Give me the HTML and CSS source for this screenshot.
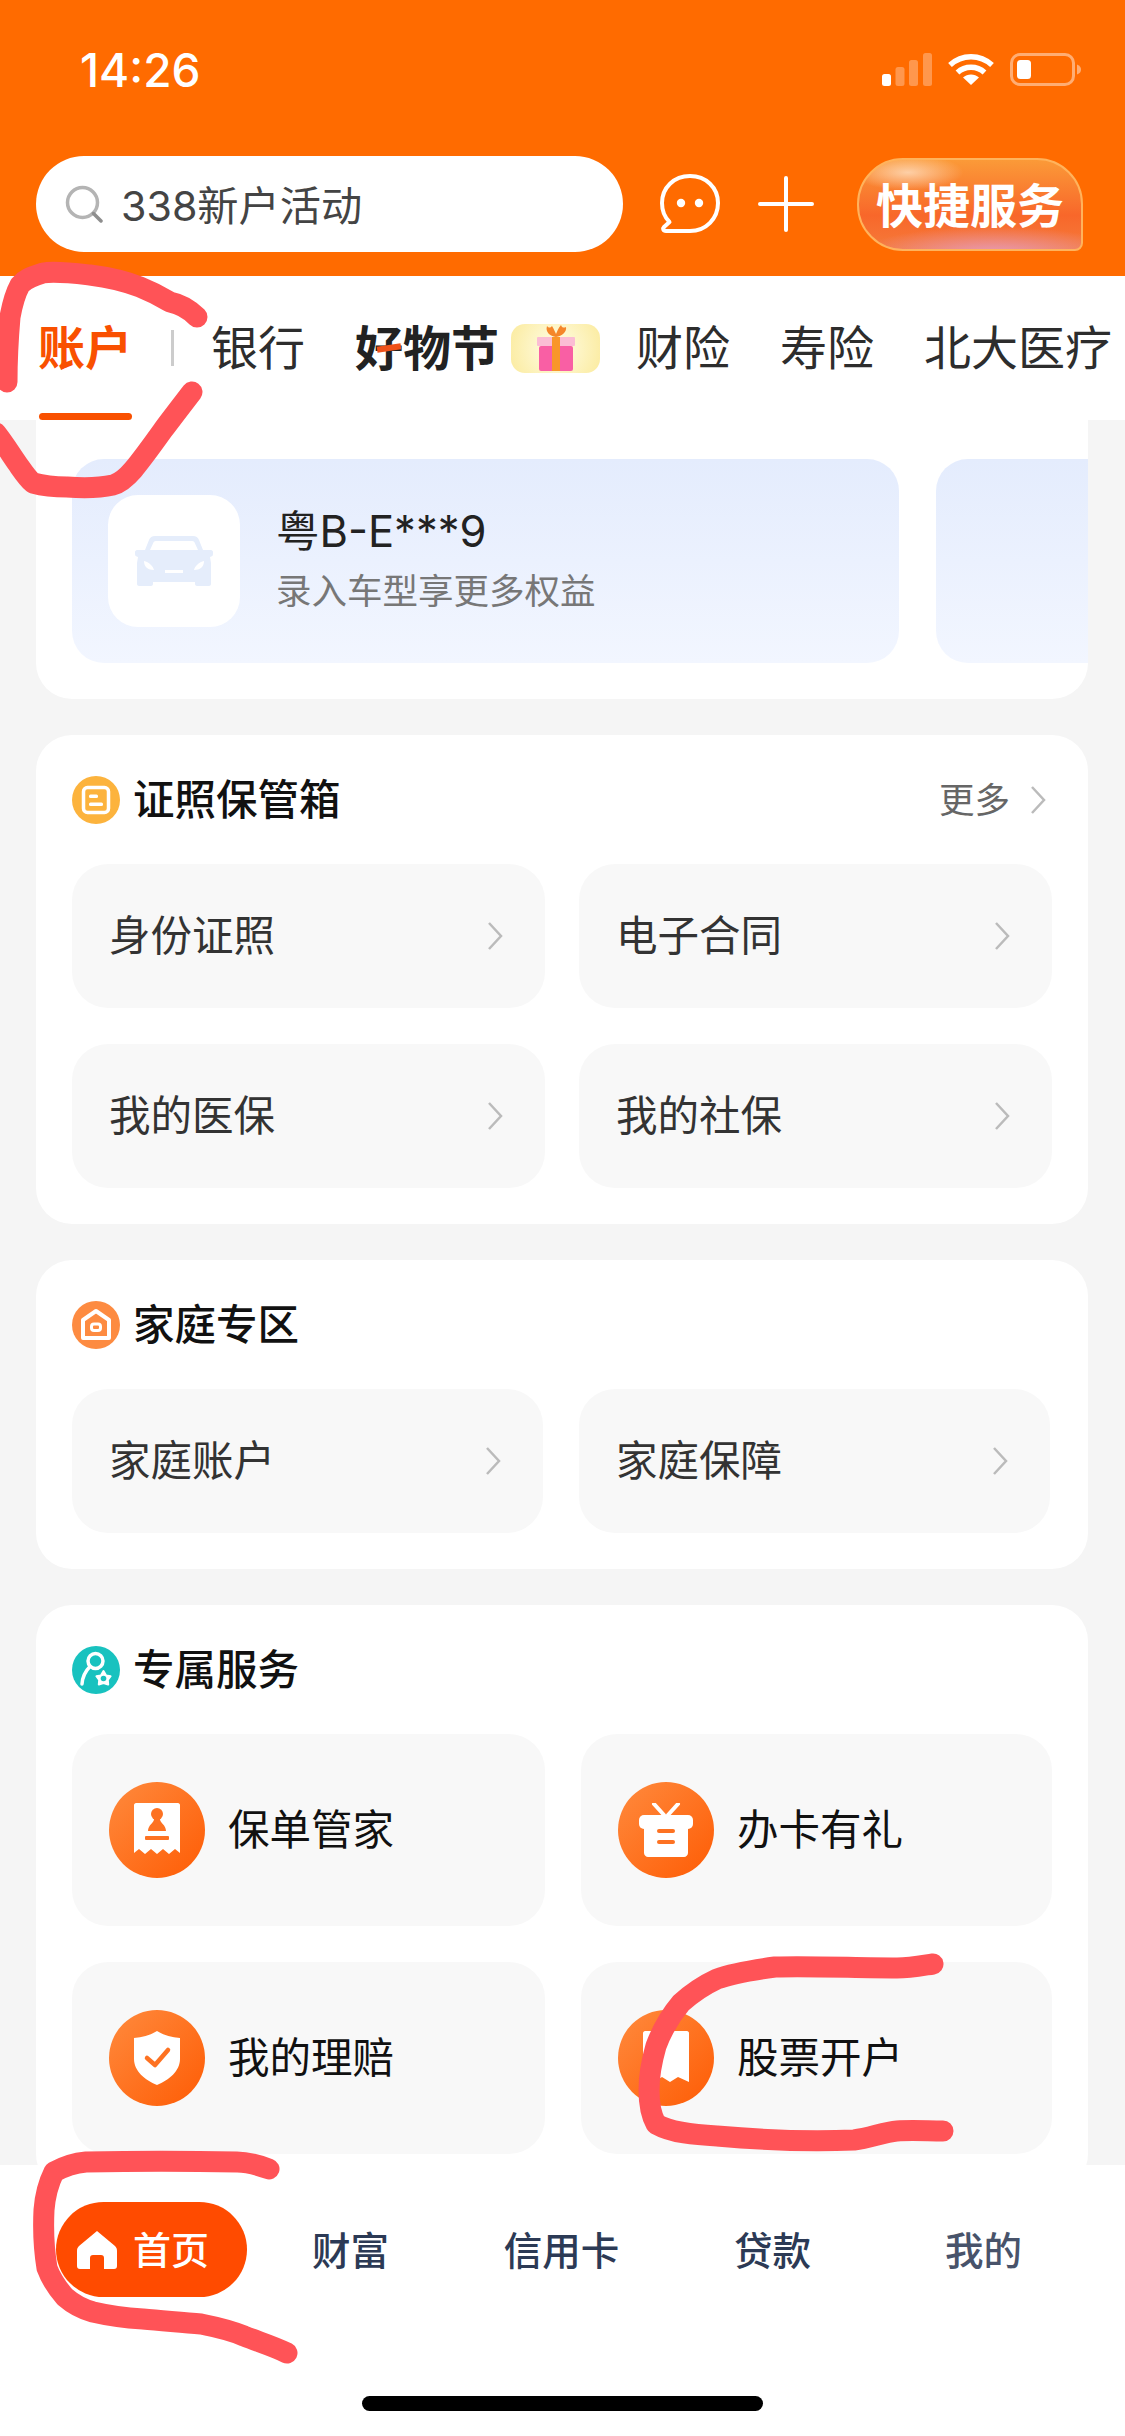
FILE: index.html
```html
<!DOCTYPE html>
<html lang="zh-CN">
<head>
  <meta charset="UTF-8">
  <meta name="viewport" content="width=device-width, initial-scale=1.0">
  <title>首页 - 账户</title>
  <link rel="stylesheet" href="styles.css">
</head>
<body>
  <div class="phone">
    <header class="top">
      <div class="status">
        <span class="time">14:26</span>
        <div class="status-icons">
          <svg width="50" height="33" viewBox="0 0 50 33">
            <rect x="0" y="21" width="9" height="12" rx="2.5" fill="#fff"/>
            <rect x="13.5" y="14" width="9" height="19" rx="2.5" fill="#fff" opacity=".3"/>
            <rect x="27" y="7" width="9" height="26" rx="2.5" fill="#fff" opacity=".3"/>
            <rect x="41" y="0" width="9" height="33" rx="2.5" fill="#fff" opacity=".3"/>
          </svg>
          <svg width="46" height="33" viewBox="0 0 46 33" fill="none" stroke="#fff" stroke-width="5.5">
            <path d="M2 12C14 1 32 1 44 12"/>
            <path d="M9.500 19.500C17 12.500 29 12.500 36.500 19.500"/>
            <path d="M23 32L15 24.500C19.500 20.500 26.500 20.500 31 24.500Z" fill="#fff" stroke="none"/>
          </svg>
          <svg width="71" height="33" viewBox="0 0 71 33" fill="none">
            <rect x="1.500" y="1.500" width="62" height="30" rx="8.500" stroke="#fff" stroke-opacity=".45" stroke-width="3"/>
            <rect x="7" y="7" width="14" height="19" rx="3.500" fill="#fff"/>
            <path d="M67 11.500C70 12.500 71 14.500 71 16.500S70 20.500 67 21.500Z" fill="#fff" fill-opacity=".45"/>
          </svg>
        </div>
      </div>
      <div class="search-row">
        <div class="search">
          <svg width="38" height="38" viewBox="0 0 38 38" fill="none" stroke-width="3.500" stroke-linecap="round">
            <circle cx="17.500" cy="17.500" r="15" stroke="#b4b4b4"/>
            <path d="M28.500 28.500L36 36" stroke="#8e8e8e"/>
          </svg>
          <span class="search-text">338新户活动</span>
        </div>
        <svg class="chat-icon" width="60" height="60" viewBox="0 0 60 60" fill="none" stroke="#fff" stroke-width="4" stroke-linejoin="round">
          <path d="M30 2C46 2 58 13.500 58 29S46 57 30 57H6C3 57 2.500 54.500 4 53L9.500 48C4.500 43 2 36.500 2 29C2 13.500 14 2 30 2Z"/>
          <circle cx="21" cy="29" r="4.200" fill="#fff" stroke="none"/>
          <circle cx="39" cy="29" r="4.200" fill="#fff" stroke="none"/>
        </svg>
        <svg class="plus-icon" width="56" height="56" viewBox="0 0 56 56" stroke="#fff" stroke-width="4" stroke-linecap="round">
          <path d="M2 28H54M28 2V54"/>
        </svg>
        <div class="quick">快捷服务</div>
      </div>
    </header>

    <nav class="tabs">
      <span class="tab tab-active">账户</span>
      <i class="tab-line"></i>
      <span class="tab">银行</span>
      <span class="tab tab-fest"><b class="fest-name">好物节<i class="fest-dash"></i></b>
        <span class="gift">
          <svg width="44" height="48" viewBox="0 0 44 48">
            <path d="M22 13C16 12 11 8 13 2C15 4 16 4 18 2C20 5 21 8 22 10C23 8 24 4 27 1C28 4 30 4 32 3C33 8 28 12 22 13Z" fill="#f5862a"/>
            <rect x="3" y="13" width="38" height="9" rx="1" fill="#fbbdd4"/>
            <rect x="5" y="22" width="34" height="25" rx="2" fill="#f95fa4"/>
            <rect x="18" y="13" width="8" height="34" fill="#f9962a"/>
          </svg>
        </span>
      </span>
      <span class="tab">财险</span>
      <span class="tab">寿险</span>
      <span class="tab">北大医疗</span>
    </nav>

    <main class="content">
      <section class="card car-card">
        <div class="car-list">
          <div class="car">
            <div class="car-thumb">
              <svg width="78" height="50" viewBox="0 0 78 50">
                <path fill="#e5edfb" fill-rule="evenodd" d="M20 0H58C61 0 63 1.500 64 4L68 14H76C77 14 78 15 78 16V18C78 20 77 20 75 21L76 27V48C76 49 75 50 74 50H62C61 50 60 49 60 48V46H18V48C18 49 17 50 16 50H4C3 50 2 49 2 48V27L3 21C1 20 0 20 0 18V16C0 15 1 14 2 14H10L14 4C15 1.500 17 0 20 0ZM21 5C19 5 18.500 6 18 7.500L15 14H63L60 7.500C59.500 6 59 5 57 5ZM9 25C9 31 13 34 19 34C18 30 14 26 9 25ZM69 25C64 26 60 30 59 34C65 34 69 31 69 25ZM30 34V37H48V34Z"/>
              </svg>
            </div>
            <div class="car-info">
              <div class="car-plate">粤B-E***9</div>
              <div class="car-tip">录入车型享更多权益</div>
            </div>
          </div>
          <div class="car"></div>
        </div>
      </section>

      <section class="card">
        <div class="card-head">
          <svg class="head-icon" width="48" height="48" viewBox="0 0 48 48">
            <circle cx="24" cy="24" r="24" fill="#fcb33d"/>
            <rect x="11.500" y="11.500" width="25" height="25" rx="4" fill="none" stroke="#fff" stroke-width="3.500"/>
            <rect x="17" y="18.500" width="9" height="3.500" rx="1.500" fill="#fff"/>
            <rect x="17" y="26.500" width="14" height="3.500" rx="1.500" fill="#fff"/>
          </svg>
          <h2 class="card-title">证照保管箱</h2>
          <span class="more"><span>更多</span>
            <svg class="chevron" width="16" height="30" viewBox="0 0 16 30"><path d="M2 2L14 15L2 28"/></svg>
          </span>
        </div>
        <div class="tile-grid">
          <div class="tile"><span>身份证照</span><svg class="chevron" width="16" height="30" viewBox="0 0 16 30"><path d="M2 2L14 15L2 28"/></svg></div>
          <div class="tile"><span>电子合同</span><svg class="chevron" width="16" height="30" viewBox="0 0 16 30"><path d="M2 2L14 15L2 28"/></svg></div>
          <div class="tile"><span>我的医保</span><svg class="chevron" width="16" height="30" viewBox="0 0 16 30"><path d="M2 2L14 15L2 28"/></svg></div>
          <div class="tile"><span>我的社保</span><svg class="chevron" width="16" height="30" viewBox="0 0 16 30"><path d="M2 2L14 15L2 28"/></svg></div>
        </div>
      </section>

      <section class="card">
        <div class="card-head">
          <svg class="head-icon" width="48" height="48" viewBox="0 0 48 48">
            <circle cx="24" cy="24" r="24" fill="#fd8b41"/>
            <path d="M24 10L37 19V37H11V19Z" fill="none" stroke="#fff" stroke-width="4" stroke-linejoin="round"/>
            <rect x="19.500" y="23" width="9" height="6.500" rx="2.500" fill="none" stroke="#fff" stroke-width="3"/>
          </svg>
          <h2 class="card-title">家庭专区</h2>
        </div>
        <div class="tile-grid tile-grid-narrow">
          <div class="tile"><span>家庭账户</span><svg class="chevron" width="16" height="30" viewBox="0 0 16 30"><path d="M2 2L14 15L2 28"/></svg></div>
          <div class="tile"><span>家庭保障</span><svg class="chevron" width="16" height="30" viewBox="0 0 16 30"><path d="M2 2L14 15L2 28"/></svg></div>
        </div>
      </section>

      <section class="card card-service">
        <div class="card-head">
          <svg class="head-icon" width="48" height="48" viewBox="0 0 48 48">
            <circle cx="24" cy="24" r="24" fill="#18c2bf"/>
            <circle cx="23.500" cy="15" r="7.500" fill="none" stroke="#fff" stroke-width="3.500"/>
            <path d="M18 20.500C13 25.500 10.500 31 10 38" fill="none" stroke="#fff" stroke-width="3.500" stroke-linecap="round"/>
            <polygon points="31.500,25 34.100,29.400 38.600,30.200 35.800,33.900 36.200,38.500 31.500,37 26.800,38.500 27.200,33.900 24.400,30.200 28.900,29.400" fill="#fff" stroke="#fff" stroke-width="2" stroke-linejoin="round"/>
            <circle cx="31.500" cy="32.500" r="2.800" fill="#18c2bf"/>
          </svg>
          <h2 class="card-title">专属服务</h2>
        </div>
        <div class="tile-grid tile-grid-service">
          <div class="tile">
            <div class="service-icon">
              <svg width="46" height="54" viewBox="0 0 46 54">
                <path fill="#fff" d="M2 0H44C45 0 46 1 46 2V50L41 46L35 51L29 46L23 51L17 46L11 51L5 46L0 50V2C0 1 1 0 2 0Z"/>
                <circle cx="23" cy="11" r="6" fill="#fd7222"/>
                <path fill="#fd7222" d="M20 16H26C26 20 32 22 32 28H14C14 22 20 20 20 16Z"/>
                <rect x="11" y="33" width="24" height="4" rx="1" fill="#fd7222"/>
              </svg>
            </div>
            <span>保单管家</span>
          </div>
          <div class="tile">
            <div class="service-icon">
              <svg width="54" height="54" viewBox="0 0 54 54">
                <path d="M15 1L25 12M39 1L29 12" stroke="#fff" stroke-width="4" stroke-linecap="round"/>
                <rect x="0" y="12" width="54" height="14" rx="5" fill="#fff"/>
                <path fill="#fff" d="M5 22H49V50C49 52 47 54 45 54H9C7 54 5 52 5 50Z"/>
                <rect x="18" y="26" width="18" height="4" rx="2" fill="#fd7222"/>
                <rect x="18" y="37" width="18" height="4" rx="2" fill="#fd7222"/>
              </svg>
            </div>
            <span>办卡有礼</span>
          </div>
          <div class="tile">
            <div class="service-icon">
              <svg width="46" height="54" viewBox="0 0 46 54">
                <path fill="#fff" d="M23 0C29 4 37 6 46 7V28C46 40 35 49 23 54C11 49 0 40 0 28V7C9 6 17 4 23 0Z"/>
                <path d="M13 27L21 34L34 19" fill="none" stroke="#fd7222" stroke-width="4.500" stroke-linecap="round" stroke-linejoin="round"/>
              </svg>
            </div>
            <span>我的理赔</span>
          </div>
          <div class="tile">
            <div class="service-icon">
              <svg width="46" height="54" viewBox="0 0 46 54">
                <path fill="#fff" d="M2 0H44C45 0 46 1 46 2V51L35 46L27 51L19 46L11 51L0 47V2C0 1 1 0 2 0Z"/>
              </svg>
            </div>
            <span>股票开户</span>
          </div>
        </div>
      </section>
    </main>

    <footer class="bottom">
      <div class="bottom-nav">
        <div class="nav-home">
          <svg width="40" height="38" viewBox="0 0 40 38">
            <path fill="#fff" d="M20 0L38 15C39.500 16.500 40 18 40 20V35C40 37 39 38 37 38H27V27C27 25 26 24 24 24H16C14 24 13 25 13 27V38H3C1 38 0 37 0 35V20C0 18 .5 16.500 2 15Z"/>
          </svg>
          <span>首页</span>
        </div>
        <span class="nav-item">财富</span>
        <span class="nav-item">信用卡</span>
        <span class="nav-item">贷款</span>
        <span class="nav-item nav-item-soft">我的</span>
      </div>
      <div class="home-bar"></div>
    </footer>

    <!-- hand drawn marks on top of the screenshot -->
    <svg class="marks" width="1125" height="2436" viewBox="0 0 1125 2436">
      <path d="M197 317C188 308 180 304 170 302C160 296 150 291 140 287C122 280 106 277 90 275C72 273 55 271 43 273C30 277 24 280 20 285C14 296 12 306 10 317C8 340 7 360 7 382"/>
      <path d="M192 392C182 405 172 418 163 430C153 444 143 458 133 470C127 477 120 483 113 485C95 489 80 488 67 487C55 487 44 486 33 483C27 478 22 470 17 463C10 453 4 443 -4 433"/>
      <path d="M933 1964C920 1966 910 1968 897 1968C856 1968 815 1966 775 1967C753 1970 733 1973 717 1979C702 1986 691 1994 681 2003C670 2016 662 2030 656 2046C652 2060 649 2075 649 2090C649 2104 651 2115 656 2124C672 2133 695 2135 717 2136C762 2140 808 2142 854 2140C870 2138 884 2132 897 2131C912 2130 928 2131 943 2131"/>
      <path d="M269 2169C258 2165 248 2162 237 2162C187 2161 136 2161 86 2162C74 2163 63 2167 54 2172C48 2184 45 2197 44 2210C43 2230 44 2250 47 2268C51 2279 58 2289 65 2297C73 2304 82 2309 93 2312C110 2316 127 2318 143 2319C163 2321 182 2322 201 2324C216 2327 230 2330 244 2336C259 2342 273 2346 287 2353"/>
    </svg>
  </div>
</body>
</html>
```

FILE: styles.css
```css
* {
  margin: 0;
  padding: 0;
  box-sizing: border-box;
  font-family: 'Noto Sans CJK SC', 'Noto Sans', sans-serif;
}

body {
  width: 1125px;
  height: 2436px;
  overflow: hidden;
  background: #f5f5f5;
}

.phone {
  position: relative;
  display: flex;
  flex-direction: column;
  width: 1125px;
  height: 2436px;
  overflow: hidden;
}

/* orange top block */
.top {
  flex: none;
  height: 276px;
  padding-top: 53px;
  background: #ff6b00;
}

.status {
  display: flex;
  justify-content: space-between;
  align-items: center;
  height: 33px;
  padding: 0 44px 0 80px;
}

.time {
  font-family: 'Inter', sans-serif;
  font-size: 46px;
  font-weight: 500;
  color: #fff;
}

.status-icons {
  display: flex;
  align-items: center;
  gap: 16px;
}

.search-row {
  display: flex;
  align-items: center;
  height: 96px;
  margin-top: 70px;
  padding-left: 36px;
}

.search {
  display: flex;
  align-items: center;
  gap: 18px;
  width: 587px;
  height: 96px;
  padding-left: 29px;
  background: #fff;
  border-radius: 48px;
}

.search-text {
  padding-bottom: 3px;
  font-family: 'Inter', 'Noto Sans CJK SC', sans-serif;
  font-size: 41.200px;
  color: #444;
}

.chat-icon {
  margin-left: 37px;
}

.plus-icon {
  margin-left: 38px;
}

.quick {
  display: flex;
  justify-content: center;
  align-items: center;
  width: 226px;
  height: 93px;
  margin-left: 43px;
  padding-bottom: 3px;
  font-size: 47px;
  font-weight: 700;
  color: #fff;
  background:
    radial-gradient(ellipse 60% 30% at 60% 105%, #e79ab8 0%, rgba(231, 154, 184, 0) 100%),
    radial-gradient(ellipse 25% 20% at 22% 14%, rgba(255, 235, 215, .7) 0%, rgba(255, 235, 215, 0) 100%),
    linear-gradient(180deg, #fb9a38 0%, #f8672a 62%, #f57a3a 100%);
  border: 2px solid #ffb35c;
  border-radius: 46px 46px 8px 46px;
}

/* tab strip */
.tabs {
  flex: none;
  display: flex;
  align-items: center;
  gap: 50px;
  height: 144px;
  padding-left: 38px;
  background: #fff;
}

.tab {
  position: relative;
  padding-bottom: 6px;
  font-size: 47px;
  line-height: 60px;
  color: #2d2d2d;
  white-space: nowrap;
}

.tab-active {
  font-weight: 700;
  color: #f95000;
}

.tab-active::after {
  content: "";
  position: absolute;
  left: 1px;
  right: 0;
  bottom: -39px;
  height: 7px;
  background: #f95000;
  border-radius: 4px;
}

.tab-line {
  width: 3px;
  height: 36px;
  margin: 0 -13px 0 -11px;
  background: #ccc;
}

.tab-fest {
  display: flex;
  align-items: center;
  gap: 12px;
  margin-right: -14px;
  padding-bottom: 0;
}

.fest-name {
  position: relative;
  padding-bottom: 6px;
  font-size: 48px;
  font-weight: 700;
  color: #222;
}

.fest-dash {
  position: absolute;
  left: 22px;
  top: 30px;
  width: 24px;
  height: 6px;
  background: #f0521a;
  transform: rotate(-8deg);
}

.gift {
  display: flex;
  justify-content: center;
  align-items: center;
  width: 89px;
  height: 49px;
  background: radial-gradient(circle, #fffde8 0%, #fbeb9e 100%);
  border-radius: 14px;
}

/* scrolling cards */
.content {
  flex: 1;
  min-height: 0;
  display: flex;
  flex-direction: column;
  gap: 36px;
  padding: 0 37px 0 36px;
  overflow: hidden;
}

.card {
  flex: none;
  padding: 41px 36px 36px;
  background: #fff;
  border-radius: 36px;
}

.car-card {
  padding: 39px 0 36px 36px;
  border-radius: 0 0 36px 36px;
  overflow: hidden;
}

.car-list {
  display: flex;
  gap: 37px;
}

.car {
  flex: none;
  display: flex;
  align-items: center;
  gap: 36px;
  width: 827px;
  height: 204px;
  padding-left: 36px;
  background: linear-gradient(180deg, #e4ecfd 0%, #f2f6ff 100%);
  border-radius: 32px;
}

.car-thumb {
  display: flex;
  justify-content: center;
  align-items: center;
  width: 132px;
  height: 132px;
  background: #fff;
  border-radius: 30px;
}

.car-info {
  padding-bottom: 6px;
}

.car-plate {
  font-family: 'Inter', 'Noto Sans CJK SC', sans-serif;
  font-size: 43.500px;
  line-height: 56px;
  color: #222;
}

.car-tip {
  margin-top: 6px;
  font-size: 35.500px;
  line-height: 48px;
  color: #777;
}

.card-head {
  display: flex;
  align-items: center;
  gap: 13px;
  height: 48px;
  margin-bottom: 40px;
}

.card-title {
  padding-bottom: 6px;
  font-size: 41.500px;
  font-weight: 500;
  color: #111;
}

.more {
  display: flex;
  align-items: center;
  gap: 20px;
  margin-left: auto;
  margin-right: 6px;
  font-size: 35.500px;
  color: #666;
}

.more span {
  padding-bottom: 6px;
}

.chevron {
  flex: none;
  fill: none;
  stroke: #bbb;
  stroke-width: 2.500;
}

.tile-grid {
  display: grid;
  grid-template-columns: 1fr 1fr;
  grid-auto-rows: 144px;
  gap: 36px 34px;
}

.tile-grid-narrow {
  grid-template-columns: 471px 471px;
  gap: 36px;
}

.tile-grid-service {
  grid-template-columns: 473px 471px;
  grid-auto-rows: 192px;
  gap: 36px;
}

.tile {
  display: flex;
  justify-content: space-between;
  align-items: center;
  padding: 0 42px 0 37px;
  font-size: 41.500px;
  color: #333;
  background: #f8f8f8;
  border-radius: 36px;
}

.tile span {
  padding-bottom: 6px;
}

.tile-grid-service .tile {
  justify-content: flex-start;
  gap: 23px;
  padding: 0 0 0 37px;
  color: #111;
}

.service-icon {
  flex: none;
  display: flex;
  justify-content: center;
  align-items: center;
  width: 96px;
  height: 96px;
  background: linear-gradient(135deg, #ff8a3d 0%, #fe5c05 100%);
  border-radius: 50%;
}

/* bottom nav */
.bottom {
  flex: none;
  display: flex;
  flex-direction: column;
  height: 271px;
  padding-top: 37px;
  background: #fff;
}

.bottom-nav {
  display: flex;
  align-items: center;
  height: 95px;
  padding: 0 36px 0 56px;
}

.nav-home {
  flex: none;
  display: flex;
  align-items: center;
  gap: 16px;
  width: 191px;
  height: 95px;
  margin-right: -2px;
  padding-left: 21px;
  font-size: 38px;
  font-weight: 500;
  color: #fff;
  background: #ff4b00;
  border-radius: 48px;
}

.nav-home span {
  padding-bottom: 4px;
}

.nav-item {
  flex: 1;
  padding-bottom: 4px;
  font-size: 38.500px;
  font-weight: 500;
  text-align: center;
  color: #2c3a55;
}

.nav-item-soft {
  color: #48536a;
}

.home-bar {
  align-self: center;
  width: 401px;
  height: 15px;
  margin-top: 99px;
  background: #000;
  border-radius: 8px;
}

/* red pen strokes drawn over the page */
.marks {
  position: absolute;
  left: 0;
  top: 0;
  fill: none;
  stroke: #ff5357;
  stroke-width: 21;
  stroke-linecap: round;
  stroke-linejoin: round;
  pointer-events: none;
}
```
